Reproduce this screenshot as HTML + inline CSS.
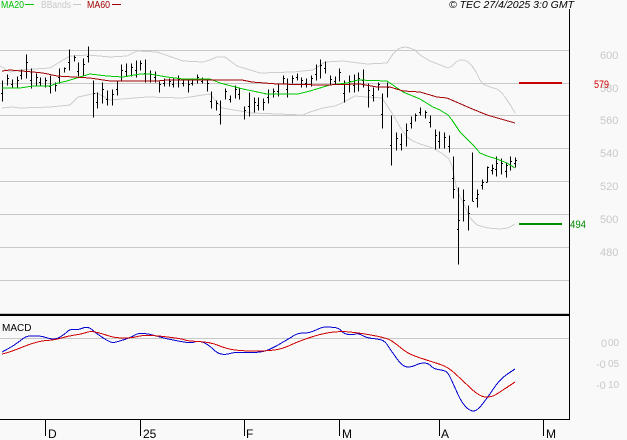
<!DOCTYPE html>
<html><head><meta charset="utf-8"><style>
html,body{margin:0;padding:0;background:#f9f9f9}
svg{display:block;font-family:"Liberation Sans",Arial,sans-serif}
</style></head><body>
<svg width="627" height="440" viewBox="0 0 627 440" xmlns="http://www.w3.org/2000/svg">
<rect width="627" height="440" fill="#f9f9f9"/>
<g shape-rendering="crispEdges" stroke="#c8c8c8" fill="none">
<path d="M0 50.5H569M0 83.5H569M0 115.5H569M0 148.5H569M0 181.5H569M0 214.5H569M0 247.5H569M0 280.5H569M0 338.5H569M0 313.5H569"/>
</g>
<g fill="none" stroke="#cdcdcd" stroke-width="1" shape-rendering="crispEdges">
<polyline points="0,66 2,67 10,72 20,70 50,68 63,60 70,56 88,55 110,57 127,56 137,51 157,52 183,61 203,62 210,60 217,57 225,57 237,66 260,73 293,72 313,70 325,62 343,61 367,64 387,63 393,54 397,50 400,48 405,47 410,48 415,50 420,55 430,61 448,68 452,66 456,62 460,60 464,60 468,62 472,66 476,72 480,80 483,84 490,87 497,89 502,93 507,100 511,106 515,113"/>
<polyline points="2,108 13,107 20,108 50,107 70,105 78,97 97,93 110,100 147,97 183,98 210,94 222,108 252,113 303,115 310,112 323,108 335,106 342,103 355,96 367,97 382,98 392,113 400,127 407,137 413,141 420,144 433,148 443,154 449,159 452,166 454,175 456,186 460,197 464,204 470,218 477,225 488,228 500,229 508,228 515,224"/>
</g>
<g transform="translate(0,.5)" shape-rendering="crispEdges">
<path fill="none" stroke="#000" stroke-width="1" d="M2.5 80V101M1 93h1M7.5 74V85M8 78h1M12.5 79V88M11 84h1M17.5 76V88M18 80h1M21.5 69V79M20 75h1M26.5 54V78M27 62h1M31.5 68V88M30 80h1M36.5 73V85M37 77h1M40.5 77V85M39 82h1M45.5 77V87M46 80h1M50.5 75V93M49 86h1M55.5 82V91M56 85h1M59.5 68V83M58 77h1M64.5 67V72M65 68h1M69.5 49V70M68 62h1M74.5 55V61M75 57h1M78.5 62V76M77 71h1M83.5 58V75M84 64h1M88.5 46V62M87 56h1M93.5 80V117M94 93h1M97.5 92V108M96 102h1M102.5 82V103M103 89h1M107.5 90V105M106 99h1M112.5 89V105M113 94h1M117.5 81V95M116 89h1M121.5 64V80M122 70h1M126.5 63V76M125 71h1M131.5 63V76M132 67h1M136.5 60V77M135 70h1M140.5 60V70M141 63h1M145.5 59V82M144 73h1M150.5 70V82M151 74h1M155.5 71V82M154 77h1M159.5 81V92M160 84h1M164.5 78V86M163 83h1M169.5 78V86M170 81h1M173.5 78V87M172 84h1M178.5 75V87M179 79h1M183.5 78V86M182 83h1M188.5 80V92M189 84h1M192.5 79V85M191 83h1M197.5 74V83M198 77h1M202.5 77V83M201 81h1M207.5 80V91M208 83h1M211.5 91V108M210 101h1M216.5 100V110M217 103h1M220.5 100V124M219 114h1M225.5 88V99M226 91h1M230.5 95V102M229 99h1M235.5 85V98M236 89h1M239.5 87V99M238 94h1M244.5 106V119M245 110h1M249.5 92V116M248 106h1M254.5 97V112M255 102h1M258.5 97V110M257 105h1M263.5 98V110M264 102h1M268.5 89V103M267 97h1M273.5 88V97M274 91h1M278.5 84V96M277 91h1M283.5 75V84M284 78h1M287.5 78V97M286 89h1M292.5 75V83M293 78h1M297.5 73V80M296 77h1M301.5 77V87M302 80h1M306.5 78V87M305 83h1M311.5 75V86M312 78h1M316.5 64V80M315 74h1M320.5 59V78M321 65h1M325.5 61V73M324 68h1M330.5 75V85M331 79h1M335.5 76V84M334 81h1M339.5 68V81M340 72h1M344.5 80V102M343 93h1M349.5 75V92M350 81h1M354.5 74V92M353 85h1M358.5 72V91M359 78h1M363.5 69V87M362 80h1M368.5 83V107M369 90h1M373.5 87V101M372 95h1M378.5 82V90M379 84h1M382.5 93V128M381 114h1M387.5 82V97M388 87h1M391.5 115V165M390 145h1M396.5 132V150M397 138h1M401.5 133V150M400 144h1M406.5 123V146M407 130h1M411.5 116V128M410 123h1M415.5 113V121M416 115h1M420.5 107V115M419 112h1M425.5 110V118M426 112h1M430.5 115V127M429 122h1M435.5 129V149M436 135h1M439.5 131V148M438 141h1M444.5 132V148M445 137h1M449.5 135V152M448 146h1M453.5 156V198M452 178h1M454 189h1M458.5 187V264M457 229h1M459 220h1M463.5 189V221M464 200h1M468.5 205V230M469 213h1M472.5 152V201M473 201h1M477.5 189V207M476 198h1M478 194h1M482.5 179V189M481 185h1M483 182h1M487.5 166V182M486 182h1M488 167h1M492.5 164V174M491 170h1M493 168h1M496.5 156V176M495 169h1M497 163h1M501.5 158V174M502 163h1M506.5 162V177M505 171h1M507 165h1M510.5 156V170M511 161h1M515.5 157V167M514 163h1M516 160h1"/>
</g>
<g fill="none" stroke-width="1" shape-rendering="crispEdges">
<polyline stroke="#00c800" points="2,88 10,88 20,88 33,86 50,86 58,83 67,81 80,77 90,74 107,76 123,77 140,74 150,74 167,77 183,79 210,79 220,83 243,89 267,94 298,94 310,91 330,85 347,83 358,80 387,81 403,92 420,99 433,107 440,110 448,115 452,120 460,132 466,138 474,146 480,153 487,156 497,159 507,163 515,168"/>
<polyline stroke="#a00000" points="2,71 10,70 33,72 43,73 57,76 90,78 110,81 157,81 167,80 242,80 252,82 277,84 323,85 360,84 377,87 390,87 403,91 420,92 437,97 447,98 470,108 487,115 515,123"/>
<path stroke="#0000d0" d="M2 352 L8.5 348.5 Q15 345 20.5 340.5 Q26 336 29.5 336 Q33 336 37.5 336 Q42 336 46 337.5 Q50 339 53.5 339 Q57 339 61 336.5 Q65 334 67.5 331.5 Q70 329 74 329.5 Q78 330 83 328 Q88 326 92.5 330 Q97 334 104 338.5 Q111 343 114 342.5 Q117 342 124.5 339.5 Q132 337 135 335 Q138 333 144 333.5 Q150 334 156.5 336 Q163 338 173 340 Q183 342 187.5 342.5 Q192 343 194.5 342 Q197 341 200 341.5 Q203 342 206.5 344 Q210 346 213.5 349.5 Q217 353 221 354 Q225 355 230 353.5 Q235 352 241 352.5 Q247 353 255 352.5 Q263 352 268 350 Q273 348 281.5 343 Q290 338 294 335.5 Q298 333 304 333 Q310 333 316 330 Q322 327 326 327 Q330 327 334.5 327.5 Q339 328 341.5 331 Q344 334 348.5 334.5 Q353 335 355.5 334 Q358 333 362.5 335.5 Q367 338 372.5 338.5 Q378 339 381.5 340 Q385 341 388.5 346.5 Q392 352 397.5 359.5 Q403 367 407.5 367 Q412 367 416 365 Q420 363 424 363 Q428 363 431 366 Q434 369 438 369.5 Q442 370 445 371 Q448 372 451.5 380 Q455 388 458.5 395.5 Q462 403 466 407 Q470 411 473.5 411 Q477 411 482.5 404 Q488 397 494 388 Q500 379 507.5 374 L515 369"/>
<path stroke="#d00000" d="M2 354 L6 353 Q10 352 24 346.5 Q38 341 46.5 340.5 Q55 340 61.5 338 Q68 336 75 335 Q82 334 86 332.5 Q90 331 95 332 Q100 333 107.5 335.5 Q115 338 123.5 338 Q132 338 137.5 336.5 Q143 335 151.5 335.5 Q160 336 171.5 337.5 Q183 339 185 340 Q187 341 198.5 341.5 Q210 342 218.5 345.5 Q227 349 235 350 Q243 351 255 351 Q267 351 274.5 350 Q282 349 289.5 345.5 Q297 342 308.5 338 Q320 334 330 332.5 Q340 331 350 332 Q360 333 373.5 335.5 Q387 338 391 340.5 Q395 343 401 348 Q407 353 413.5 355.5 Q420 358 426.5 360 Q433 362 440.5 364.5 Q448 367 455 373.5 Q462 380 471 388.5 Q480 397 486 397 Q492 397 496 394.5 Q500 392 507.5 387 L515 382"/>
</g>
<g shape-rendering="crispEdges">
<rect x="0" y="314" width="569" height="2" fill="#000"/>
<rect x="569" y="9" width="1" height="411" fill="#000"/>
<rect x="0" y="419" width="570" height="1" fill="#000"/>
<path stroke="#000" d="M45.5 419V436M140.5 419V436M244.5 419V436M339.5 419V436M439.5 419V436M543.5 419V436"/>
<rect x="25" y="4" width="9" height="1" fill="#00c800"/>
<rect x="73" y="4" width="8" height="1" fill="#c8c8c8"/>
<rect x="112" y="4" width="9" height="1" fill="#a00000"/>
<rect x="519" y="82" width="43" height="2" fill="#c80000"/>
<rect x="519" y="223" width="43" height="2" fill="#009000"/>
</g>
<g font-size="10">
<text x="1" y="8" fill="#00c000" textLength="23" lengthAdjust="spacingAndGlyphs">MA20</text>
<text x="41" y="8" fill="#c8c8c8" textLength="30" lengthAdjust="spacingAndGlyphs">BBands</text>
<text x="87" y="8" fill="#a00000" textLength="23" lengthAdjust="spacingAndGlyphs">MA60</text>
<text x="449" y="8" fill="#000" font-style="italic" textLength="125" lengthAdjust="spacingAndGlyphs">© TEC 27/4/2025 3:0 GMT</text>
</g>
<g font-size="11" fill="#c8c8c8">
<text x="600" y="59">600</text>
<text x="600" y="92">580</text>
<text x="600" y="124">560</text>
<text x="600" y="157">540</text>
<text x="600" y="190">520</text>
<text x="600" y="223">500</text>
<text x="600" y="256">480</text>
<text x="601" y="347">0</text>
<text x="608" y="346" font-size="10">00</text>
<text x="596" y="368">-0</text>
<text x="608" y="367" font-size="10">05</text>
<text x="596" y="389">-0</text>
<text x="608" y="388" font-size="10">10</text>
</g>
<text x="594" y="88" font-size="11" fill="#d00000" textLength="15" lengthAdjust="spacingAndGlyphs">579</text>
<text x="570" y="228" font-size="11" fill="#008c00" textLength="16" lengthAdjust="spacingAndGlyphs">494</text>
<text x="2" y="331" font-size="10" fill="#000">MACD</text>
<g font-size="12" fill="#000">
<text x="48" y="438">D</text>
<text x="143" y="438">25</text>
<text x="246" y="438">F</text>
<text x="342" y="438">M</text>
<text x="441" y="438">A</text>
<text x="546" y="438">M</text>
</g>
</svg>
</body></html>
